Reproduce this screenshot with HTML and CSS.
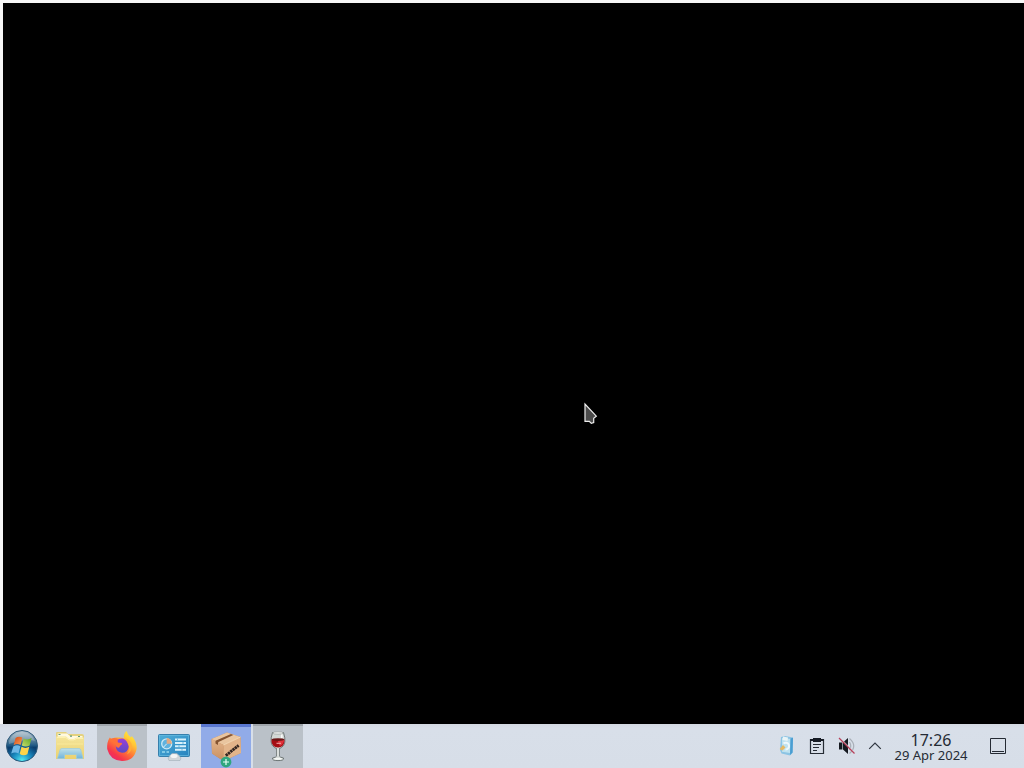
FILE: index.html
```
<!DOCTYPE html>
<html lang="en">
<head>
  <meta charset="UTF-8">
  <meta name="viewport" content="width=device-width, initial-scale=1.0">
  <title>Desktop</title>
  <link rel="stylesheet" href="styles.css">
</head>
<body>
  <div class="window">
    <!-- Mouse pointer -->
    <svg class="cursor" width="16" height="24" viewBox="0 0 16 24">
      <path d="M2 2 V19.3 H6.3 L8.3 21.4 L10.7 20.6 V16.2 L13.3 14.2 Z" fill="#4b4b4b" stroke="#eee" stroke-width="1.2"/>
    </svg>
  </div>

  <div class="taskbar">
    <div class="start">
      <svg width="34" height="34" viewBox="0 0 34 34">
        <defs>
          <linearGradient id="orb" x1="0" y1="0" x2="0" y2="1">
            <stop offset="0" stop-color="#b3c3cf"/>
            <stop offset=".3" stop-color="#5b829b"/>
            <stop offset=".48" stop-color="#1f5a86"/>
            <stop offset=".55" stop-color="#0a3d6c"/>
            <stop offset="1" stop-color="#0c5c96"/>
          </linearGradient>
          <radialGradient id="glow" cx=".5" cy="1" r=".6">
            <stop offset="0" stop-color="#5df3f6"/>
            <stop offset=".5" stop-color="#1f9fd2" stop-opacity=".8"/>
            <stop offset="1" stop-color="#1680bd" stop-opacity="0"/>
          </radialGradient>
          <linearGradient id="flagRed" x1="0" y1="0" x2="1" y2="1">
            <stop offset="0" stop-color="#d8420f"/>
            <stop offset="1" stop-color="#f7a35a"/>
          </linearGradient>
          <linearGradient id="flagGreen" x1="1" y1="0" x2="0" y2="1">
            <stop offset="0" stop-color="#5aa324"/>
            <stop offset="1" stop-color="#c9df6b"/>
          </linearGradient>
        </defs>
        <circle cx="17" cy="17" r="15.5" fill="url(#orb)" stroke="#2d597a" stroke-width="1"/>
        <circle cx="17" cy="17" r="15" fill="url(#glow)"/>
        <path d="M4 12 Q7.5 3.5 17 3 Q26.5 3.5 30 12 Q22 9 4 15 Z" fill="#fff" opacity=".22"/>
        <path d="M10.6 9 Q13.8 6.5 17.4 8.6 L15.6 15.9 Q12 14 8.6 16.2 Z" fill="url(#flagRed)"/>
        <path d="M18.6 9.4 Q22.3 11.6 26.6 9 L24.6 16.6 Q20.8 18.6 16.8 16.5 Z" fill="url(#flagGreen)"/>
        <path d="M8.3 17.4 Q12 15.3 15.4 17.2 L13.5 24.4 Q9.8 22.4 6.2 24.6 Z" fill="#6eb7e6"/>
        <path d="M16.5 17.8 Q20.3 20 24.3 17.8 L22.4 25.2 Q18.5 27.3 14.7 25 Z" fill="#ffd44a"/>
      </svg>
    </div>

    <div class="tasks">
      <div class="task">
        <!-- File manager -->
        <svg width="32" height="32" viewBox="0 0 32 32">
          <defs>
            <linearGradient id="folder" x1="0" y1="0" x2="0" y2="1">
              <stop offset="0" stop-color="#f4e59b"/>
              <stop offset="1" stop-color="#ebd16f"/>
            </linearGradient>
            <linearGradient id="stand" x1="0" y1="0" x2="0" y2="1">
              <stop offset="0" stop-color="#c0e0e8"/>
              <stop offset="1" stop-color="#70b4dc"/>
            </linearGradient>
          </defs>
          <path d="M2 3 Q2 2 3 2 H12 L14 4 H28 Q30 4 30 6 V29 H2 Z" fill="#e4d17f"/>
          <path d="M3.5 3.5 H13 L16 6 H28.5 V9 H4 Z" fill="#fff9df"/>
          <path d="M4.5 4.5 H6.5 M16 6.2 H18 M24 6.5 H26" stroke="#5d9c7d" stroke-width="1.2"/>
          <path d="M2 6.5 H12 L15 9 H20 L23 7.5 H30 V29 H2 Z" fill="url(#folder)"/>
          <path d="M3 7.3 H11.5 L15 9.8 H20 L23 8.3 H29" fill="none" stroke="#fff4b5"/>
          <path d="M3 14 H29" stroke="#fff1a5" opacity=".6"/>
          <path d="M3.5 28.5 L6 20 Q6.3 18.5 8 18.5 H25 Q26.4 18.5 26.8 20 L29 28.5 H22.5 V24.5 H10.5 V28.5 Z" fill="url(#stand)" stroke="#98cce1" stroke-width=".7"/>
        </svg>
      </div>

      <div class="task running">
        <!-- Web browser -->
        <svg width="32" height="32" viewBox="0 0 32 32">
          <defs>
            <linearGradient id="fox" x1=".85" y1="0" x2=".15" y2=".95">
              <stop offset="0" stop-color="#fff13e"/>
              <stop offset=".3" stop-color="#ffc436"/>
              <stop offset=".56" stop-color="#ff7835"/>
              <stop offset=".82" stop-color="#f6354c"/>
              <stop offset="1" stop-color="#e82872"/>
            </linearGradient>
            <linearGradient id="globe" x1="0" y1="0" x2="0" y2="1">
              <stop offset="0" stop-color="#9b3fd8"/>
              <stop offset="1" stop-color="#5a4cc4"/>
            </linearGradient>
          </defs>
          <path d="M3.8 7.5 Q4.8 8.6 6 9 Q8.5 7.5 11 7.6 Q14 7 18 8 Q17.3 4 20.5 1 Q21.5 5 25 7.4 L25.8 6 Q31 12 30.7 18.5 Q28.5 31 16 31 Q4 30.5 1.2 19 Q.7 12 3.8 7.5 Z" fill="url(#fox)"/>
          <path d="M10.5 10.5 Q13 8 17 8.6 Q22.5 10 22.8 16.5 Q22 22.8 16 22.8 Q10 22 9.8 16 Z" fill="url(#globe)"/>
          <path d="M4.5 9 Q8 7.3 11.2 8.6 Q11.8 9.2 12.3 9.2 Q11 11 12 12.6 L16 13 Q16.5 14.6 14.2 15.7 L13 17.8 Q9.5 17.8 9.6 14 Q6 12 4.5 9 Z" fill="#ff7139"/>
          <path d="M17 8 Q25 8.5 26 16 Q26 22 20.8 24.6 Q24 20 22.6 15.2 Q21 10.5 17 8 Z" fill="#ffad37" opacity=".85"/>
        </svg>
      </div>

      <div class="task">
        <!-- System settings -->
        <svg width="34" height="32" viewBox="0 0 34 32">
          <defs>
            <linearGradient id="panel" x1="0" y1="0" x2="1" y2="1">
              <stop offset="0" stop-color="#51afd9"/>
              <stop offset="1" stop-color="#2682be"/>
            </linearGradient>
          </defs>
          <rect x="1.5" y="4.5" width="31" height="22" rx="1" fill="url(#panel)" stroke="#377fac"/>
          <rect x="2.6" y="5.6" width="28.8" height="19.8" fill="none" stroke="#68bce0" stroke-width=".7"/>
          <circle cx="9.7" cy="13.8" r="5" fill="#5fb2de" stroke="#cce9f4" stroke-width="1.3"/>
          <path d="M9.7 13.8 V8 Q14.7 8.5 15 13.8 Z" fill="#e2a982"/>
          <path d="M9.7 13.8 L6.2 17.5" stroke="#d9eef6"/>
          <path d="M18 9.5 H29 M18 12.9 H29 M18 16.3 H29 M18 19.7 H29" stroke="#d8f1fb" stroke-width="2"/>
          <path d="M20.5 8.5 V10.5 M26 12 V14 M22 15.3 V17.3 M25 18.7 V20.7" stroke="#5aafd7" stroke-width=".8"/>
          <path d="M5 22 H8 M9.5 22 H12" stroke="#98d7ed" stroke-width="1.3"/>
          <path d="M15 23.5 H20 L22 25.5 L24 28 L23 30.5 H12 L11 28 L13 25.5 Z" fill="#d0d6da" stroke="#a1afb8" stroke-width=".6"/>
          <ellipse cx="17" cy="26" rx="3.5" ry="2" fill="#f4f5f5"/>
        </svg>
      </div>

      <div class="task active">
        <!-- Package installer -->
        <svg width="34" height="34" viewBox="0 0 34 34">
          <defs>
            <linearGradient id="boxFront" x1="0" y1="0" x2="0" y2="1">
              <stop offset="0" stop-color="#e2b48a"/>
              <stop offset="1" stop-color="#c98f62"/>
            </linearGradient>
          </defs>
          <path d="M2.5 9 L18 2.5 L31.5 7 L32 23 L14.5 31 L3 23.5 Z" fill="#c18557"/>
          <path d="M2.5 9 L18 2.5 L31.5 7 L14.5 15 Z" fill="#e9c59f"/>
          <path d="M2.5 9 L14.5 15 V31 L3 23.5 Z" fill="url(#boxFront)"/>
          <path d="M14.5 15 L31.5 7 L32 23 L14.5 31 Z" fill="#e2b48a"/>
          <path d="M6.5 10.8 L22 4 L24.3 4.9 L9 12.2 V15 L6.5 13.5 Z" fill="#845431"/>
          <path d="M14.5 15 L31.5 7" stroke="#f8dfbd" stroke-width=".8"/>
          <path d="M16.8 25.6 L29.6 15.4" stroke="#332621" stroke-width="2.9" stroke-dasharray="2.4 .5"/>
        </svg>
        <svg class="badge" width="12" height="12" viewBox="0 0 12 12">
          <circle cx="6" cy="6" r="5.4" fill="#2fa67e"/>
          <path d="M6 3 V9 M3 6 H9" stroke="#e5fff5" stroke-width="1.2"/>
        </svg>
      </div>

      <div class="task running">
        <!-- Wine -->
        <svg width="32" height="32" viewBox="0 0 32 32">
          <path d="M10.5 2.5 H21.5 Q25.3 14 19.4 17.6 L17.3 18.6 V26 Q17.7 27.3 21.5 28 Q22.5 30.6 16 30.6 Q9.5 30.6 10.5 28 Q14.3 27.3 14.7 26 V18.6 L12.6 17.6 Q6.7 14 10.5 2.5 Z" fill="#d3d8d5" stroke="#6f7777"/>
          <ellipse cx="16" cy="3" rx="5.2" ry="1.2" fill="#eef1ef" stroke="#8c9292" stroke-width=".6"/>
          <path d="M9.5 9.5 H22.5 Q22.8 14.5 19.3 16.8 Q16 18.2 12.7 16.8 Q9.2 14.5 9.5 9.5 Z" fill="#a50d14"/>
          <path d="M15.5 10 H22 Q22 14 17.8 16 Z" fill="#e0313a"/>
          <ellipse cx="16" cy="9.6" rx="6.3" ry="1.4" fill="#6c1717"/>
          <path d="M14.5 13.3 H19" stroke="#f0a1a1" stroke-width="1.1"/>
          <path d="M19.8 4.5 V8" stroke="#fff" stroke-width="1.4"/>
          <path d="M16 18.5 V26" stroke="#f5f8f6"/>
          <ellipse cx="16" cy="28.7" rx="4" ry="1" fill="#f4f7f5"/>
        </svg>
      </div>
    </div>

    <div class="tray">
      <svg width="22" height="22" viewBox="0 0 22 22">
        <path d="M5 2 L9 1 L17 2.5 L16.5 18 L14 20.5 L5.5 18.5 L4 15 Z" fill="#8cc4e4"/>
        <path d="M6 3 L14.5 4 L14 18 L6 16.8 Z" fill="#bfe2ef"/>
        <path d="M7 1.5 L12 2.5 L11.5 6 L6.5 5 Z" fill="#eaf4f6"/>
        <path d="M14.5 3.5 L17 2.8 L16.6 17.5 L14 20 Z" fill="#4a9ed2"/>
        <path d="M7.5 8.5 A3.4 3.4 0 1 1 9.5 14.5" fill="none" stroke="#eef8fb" stroke-width="2"/>
        <path d="M3.6 14 L7 10 L9.5 12.5 L6.5 15.5 Z" fill="#e4b965"/>
      </svg>
      <!-- Clipboard -->
      <svg width="22" height="22" viewBox="0 0 22 22">
        <path d="M4.5 4.5 H17.5 V18.5 H4.5 Z" fill="none" stroke="#252b34" stroke-width="1.2"/>
        <path d="M4 4 H7 V3 H15 V4 H18 V6 H15 V7 H7 V6 H4 Z" fill="#171c25"/>
        <path d="M7 9.5 H15 M7 12.5 H13 M7 15.5 H11" stroke="#252b34"/>
      </svg>
      <!-- Muted volume -->
      <svg width="22" height="22" viewBox="0 0 22 22">
        <path d="M3 7.5 H6.4 V14.5 H3 Z M7 7.5 L12 3 V19 L7 14.5 Z" fill="#151920"/>
        <path d="M13.5 7 Q16 11 13.5 15 M13.5 3.5 Q22 11 13.5 18.5" fill="none" stroke="#a9afb8" stroke-width="1.2"/>
        <path d="M3.8 2.6 L19.3 18.1" stroke="#d8dee7" stroke-width="1"/>
        <path d="M3 3 L18.5 18.5" stroke="#b8405a" stroke-width="1.2"/>
      </svg>
      <svg class="expand" width="16" height="22" viewBox="0 0 16 22">
        <path d="M2.2 13.8 L8 8 L13.8 13.8" fill="none" stroke="#303640" stroke-width="1.2"/>
      </svg>
    </div>

    <div class="clock">
      <div class="time">17:26</div>
      <div class="date">29 Apr 2024</div>
    </div>

    <div class="show-desktop">
      <svg width="18" height="18" viewBox="0 0 18 18">
        <path d="M1.5 1.5 H16.5 V16.5 H1.5 Z M3 14.5 H15" fill="none" stroke="#252b34"/>
      </svg>
    </div>
  </div>
</body>
</html>
```

FILE: styles.css
```
* {
  box-sizing: border-box;
}

body {
  display: flex;
  flex-direction: column;
  height: 100vh;
  margin: 0;
  overflow: hidden;
  background-color: #000;
  font-family: "Noto Sans", sans-serif;
}

svg {
  display: block;
  flex-shrink: 0;
}

.window {
  position: relative;
  flex: 1;
  background-color: #000;
  border-top: 3px solid #f7f7f7;
  border-left: 3px solid #f7f7f7;
}

.cursor {
  position: absolute;
  left: 580px;
  top: 399px;
}

.taskbar {
  display: flex;
  height: 44px;
  background: linear-gradient(#d3d9e2, #d8dfe9 4px, #d7dee8);
  color: #252b34;
}

.start {
  display: flex;
  justify-content: center;
  align-items: center;
  width: 45px;
  padding-right: 2px;
}

.tasks {
  display: flex;
  gap: 2px;
}

.task {
  position: relative;
  display: flex;
  justify-content: center;
  align-items: center;
  width: 50px;
  height: 44px;
}

.running {
  background-color: #bac1c8;
  border-top: 2px solid #9fa5ab;
  padding-bottom: 2px;
}

.active {
  background-color: #91abe8;
  border-top: 3px solid #5977d0;
  padding-bottom: 2px;
}

.badge {
  position: absolute;
  left: 19px;
  bottom: 0;
}

.tray {
  display: flex;
  align-items: center;
  gap: 8px;
  margin-left: auto;
}

.expand {
  margin-left: 1px;
}

.clock {
  width: 74px;
  margin-left: 11px;
  padding-top: 6px;
  text-align: center;
  white-space: nowrap;
}

.time {
  font-size: 16px;
  line-height: 20px;
}

.date {
  font-size: 13px;
  line-height: 10px;
}

.show-desktop {
  display: flex;
  align-items: center;
  margin: 0 17px 0 21px;
}
```
